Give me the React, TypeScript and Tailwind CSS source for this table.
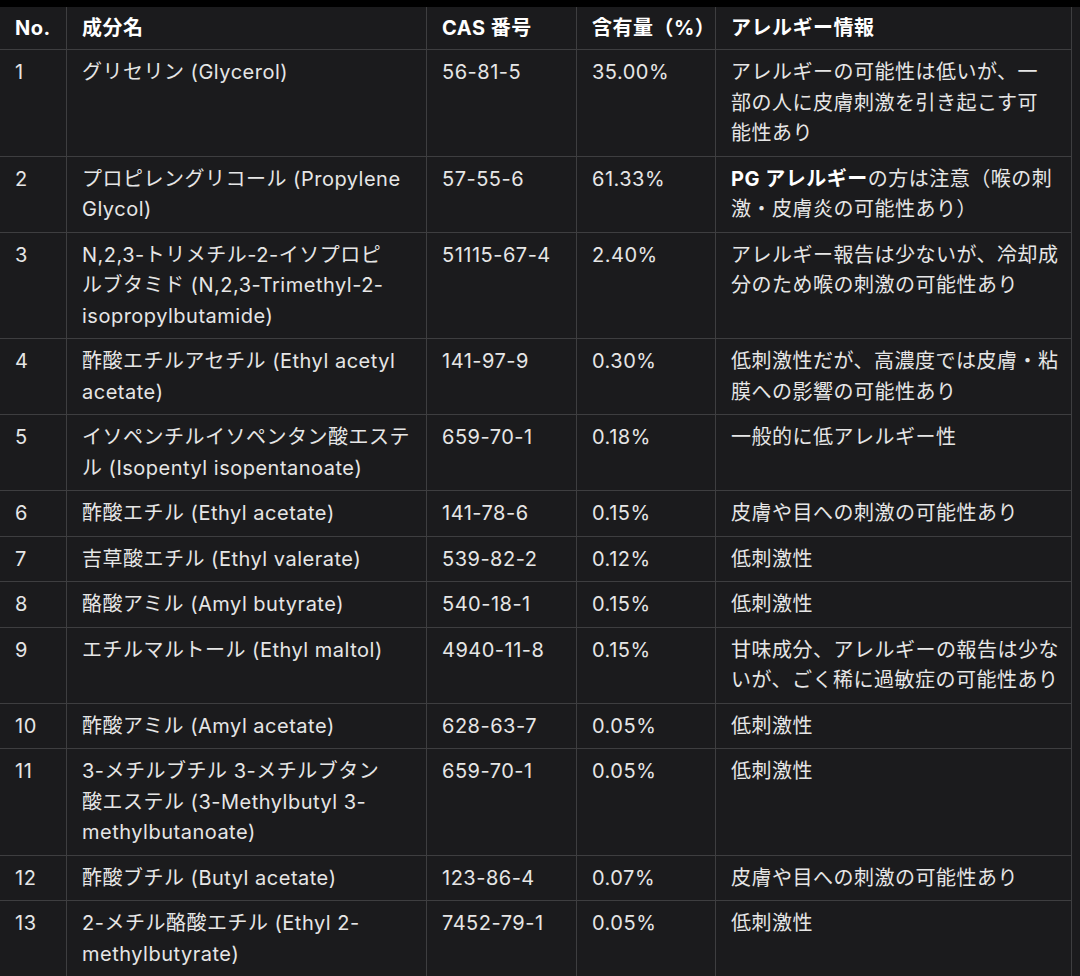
import React from 'react';

type Row = {
  no: string;
  name: React.ReactNode;
  cas: string;
  amount: string;
  allergy: React.ReactNode;
};

const rows: Row[] = [
  {
    no: '1',
    name: 'グリセリン (Glycerol)',
    cas: '56-81-5',
    amount: '35.00%',
    allergy: (
      <>
        アレルギーの可能性は低いが、一
        <br />
        部の人に皮膚刺激を引き起こす可
        <br />
        能性あり
      </>
    ),
  },
  {
    no: '2',
    name: (
      <>
        プロピレングリコール (Propylene
        <br />
        Glycol)
      </>
    ),
    cas: '57-55-6',
    amount: '61.33%',
    allergy: (
      <>
        <span className="font-bold text-white">PG アレルギー</span>の方は注意（喉の刺
        <br />
        激・皮膚炎の可能性あり）
      </>
    ),
  },
  {
    no: '3',
    name: (
      <>
        N,2,3-トリメチル-2-イソプロピ
        <br />
        ルブタミド (N,2,3-Trimethyl-2-
        <br />
        isopropylbutamide)
      </>
    ),
    cas: '51115-67-4',
    amount: '2.40%',
    allergy: (
      <>
        アレルギー報告は少ないが、冷却成
        <br />
        分のため喉の刺激の可能性あり
      </>
    ),
  },
  {
    no: '4',
    name: (
      <>
        酢酸エチルアセチル (Ethyl acetyl
        <br />
        acetate)
      </>
    ),
    cas: '141-97-9',
    amount: '0.30%',
    allergy: (
      <>
        低刺激性だが、高濃度では皮膚・粘
        <br />
        膜への影響の可能性あり
      </>
    ),
  },
  {
    no: '5',
    name: (
      <>
        イソペンチルイソペンタン酸エステ
        <br />
        ル (Isopentyl isopentanoate)
      </>
    ),
    cas: '659-70-1',
    amount: '0.18%',
    allergy: '一般的に低アレルギー性',
  },
  { no: '6', name: '酢酸エチル (Ethyl acetate)', cas: '141-78-6', amount: '0.15%', allergy: '皮膚や目への刺激の可能性あり' },
  { no: '7', name: '吉草酸エチル (Ethyl valerate)', cas: '539-82-2', amount: '0.12%', allergy: '低刺激性' },
  { no: '8', name: '酪酸アミル (Amyl butyrate)', cas: '540-18-1', amount: '0.15%', allergy: '低刺激性' },
  {
    no: '9',
    name: 'エチルマルトール (Ethyl maltol)',
    cas: '4940-11-8',
    amount: '0.15%',
    allergy: (
      <>
        甘味成分、アレルギーの報告は少な
        <br />
        いが、ごく稀に過敏症の可能性あり
      </>
    ),
  },
  { no: '10', name: '酢酸アミル (Amyl acetate)', cas: '628-63-7', amount: '0.05%', allergy: '低刺激性' },
  {
    no: '11',
    name: (
      <>
        3-メチルブチル 3-メチルブタン
        <br />
        酸エステル (3-Methylbutyl 3-
        <br />
        methylbutanoate)
      </>
    ),
    cas: '659-70-1',
    amount: '0.05%',
    allergy: '低刺激性',
  },
  { no: '12', name: '酢酸ブチル (Butyl acetate)', cas: '123-86-4', amount: '0.07%', allergy: '皮膚や目への刺激の可能性あり' },
  {
    no: '13',
    name: (
      <>
        2-メチル酪酸エチル (Ethyl 2-
        <br />
        methylbutyrate)
      </>
    ),
    cas: '7452-79-1',
    amount: '0.05%',
    allergy: '低刺激性',
  },
];

const gridCols = 'grid grid-cols-[67px_360px_150px_139px_356px] border-b border-[#3e3e40]';
const cell = 'border-r border-[#3e3e40] px-[15px] whitespace-nowrap';

export default function App() {
  return (
    <div
      className="min-h-[976px] w-[1080px] bg-[#1b1b1d] text-[20px] tracking-[0.5px] text-[#e6e6e6]"
      style={{ fontFamily: '"Inter", "Noto Sans CJK JP", sans-serif' }}
    >
      <div className="h-[7px] bg-black" />
      <div className="w-[1072px]">
        {/* header */}
        <div className={`${gridCols} font-bold text-white leading-[30px]`}>
          <div className={`${cell} py-[6px]`}>No.</div>
          <div className={`${cell} py-[6px]`}>成分名</div>
          <div className={`${cell} py-[6px]`}>CAS 番号</div>
          <div className={`${cell} py-[6px]`}>含有量（%）</div>
          <div className={`${cell} py-[6px]`}>アレルギー情報</div>
        </div>

        {rows.map((r) => (
          <div key={r.no} className={`${gridCols} leading-[30.5px]`}>
            <div className={`${cell} py-[7px]`}>{r.no}</div>
            <div className={`${cell} py-[7px]`}>{r.name}</div>
            <div className={`${cell} py-[7px]`}>{r.cas}</div>
            <div className={`${cell} py-[7px]`}>{r.amount}</div>
            <div className={`${cell} py-[7px]`}>{r.allergy}</div>
          </div>
        ))}
      </div>
    </div>
  );
}
